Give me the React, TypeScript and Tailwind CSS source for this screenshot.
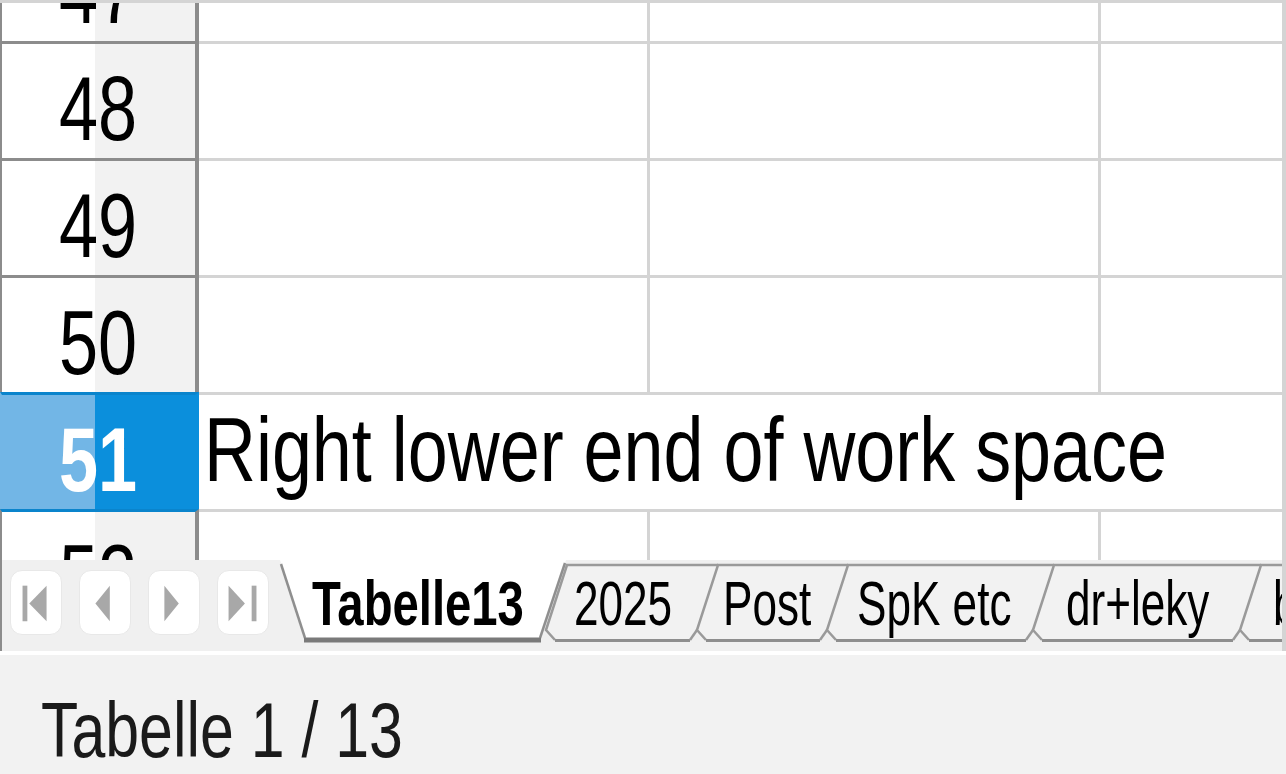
import React from "react";

function NavIcon({ kind }: { kind: number }) {
  const c = "#a8a8a8";
  return (
    <svg width="52" height="65" viewBox="0 0 52 65">
      {kind === 0 && (
        <>
          <rect x="12" y="15" width="5" height="37" fill={c} />
          <polygon points="19,33.5 37,15 37,52" fill={c} />
        </>
      )}
      {kind === 1 && <polygon points="16,33.5 31,15 31,52" fill={c} />}
      {kind === 2 && <polygon points="31,33.5 16,15 16,52" fill={c} />}
      {kind === 3 && (
        <>
          <polygon points="28,33.5 11,15 11,52" fill={c} />
          <rect x="35" y="15" width="5" height="37" fill={c} />
        </>
      )}
    </svg>
  );
}

function InactiveTab({
  w,
  cls,
  padCls,
  label,
}: {
  w: number;
  cls: string;
  padCls: string;
  label: string;
}) {
  return (
    <div className={`relative shrink-0 h-full ${cls}`}>
      <svg
        className="absolute left-0 top-0 overflow-visible"
        width={w}
        height={91}
      >
        <path
          d={`M0,70 L21,5 L${w + 21},5 L${w},70 L${w - 7},80 L9,80 Z`}
          fill="#f2f2f2"
        />
        <path
          d={`M9,80 L0,70 L21,5 L${w + 21},5`}
          fill="none"
          stroke="#9a9a9a"
          strokeWidth="2.5"
        />
        <path d={`M9,80.5 L${w - 7},80.5`} stroke="#8e8e8e" strokeWidth="3" />
        <path
          d={`M${w - 7},80 L${w},70`}
          fill="none"
          stroke="#9a9a9a"
          strokeWidth="2.5"
        />
      </svg>
      <div className={`relative pt-[12px] ${padCls}`}>
        <span className="inline-block whitespace-nowrap text-[63px] leading-none text-black scale-x-[0.7] origin-left">
          {label}
        </span>
      </div>
    </div>
  );
}

function Row({
  n,
  sel,
  selAbove,
  text,
}: {
  n: number;
  sel?: boolean;
  selAbove?: boolean;
  text?: string;
}) {
  const headCls = sel
    ? "border-t-[#0a84cc] border-l-[#72b6e6] border-r-[#0b8fdc] bg-[linear-gradient(90deg,#72b6e6_93px,#0b8fdc_93px)] text-white font-bold"
    : selAbove
    ? "border-t-[#0a84cc] border-l-[#8c8c8c] border-r-[#8c8c8c] bg-[linear-gradient(90deg,#ffffff_93px,#f2f2f2_93px)] text-black"
    : "border-t-[#8c8c8c] border-l-[#8c8c8c] border-r-[#8c8c8c] bg-[linear-gradient(90deg,#ffffff_93px,#f2f2f2_93px)] text-black";
  return (
    <div className="flex h-[117px] shrink-0">
      <div
        className={`w-[199px] shrink-0 border-t-[3px] border-l-2 border-r-4 flex justify-center items-start pt-[20px] ${headCls}`}
      >
        <span className="inline-block text-[90px] leading-none scale-x-[0.78]">
          {n}
        </span>
      </div>
      {text ? (
        <div className="flex-1 border-t-[3px] border-[#d4d4d4] bg-white pt-[9px] pl-[5px] overflow-visible">
          <span className="inline-block whitespace-nowrap text-[91px] leading-none text-black scale-x-[0.79] origin-left">
            {text}
          </span>
        </div>
      ) : (
        <>
          <div className="w-[451px] shrink-0 border-t-[3px] border-r-[3px] border-[#d4d4d4] bg-white" />
          <div className="w-[451px] shrink-0 border-t-[3px] border-r-[3px] border-[#d4d4d4] bg-white" />
          <div className="flex-1 border-t-[3px] border-[#d4d4d4] bg-white" />
        </>
      )}
    </div>
  );
}

export default function App() {
  return (
    <div className="w-[1286px] h-[774px] overflow-hidden flex flex-col bg-[#f2f2f2] font-['Liberation_Sans',Arial,sans-serif]">
      <div className="h-[651px] shrink-0 flex flex-col border-t-[3px] border-r-4 border-[#d4d4d4] bg-white">
        <div className="h-[557px] shrink-0 overflow-hidden">
          <div className="-mt-[79px] flex flex-col">
            <Row n={47} />
            <Row n={48} />
            <Row n={49} />
            <Row n={50} />
            <Row n={51} sel text="Right lower end of work space" />
            <Row n={52} selAbove />
          </div>
        </div>
        <div className="h-[91px] shrink-0 flex bg-[#f0f0f0] border-l-2 border-[#8c8c8c] overflow-hidden">
          <div className="w-[278px] shrink-0 flex gap-[17px] pl-[8px] pt-[10px]">
            {[0, 1, 2, 3].map((k) => (
              <div
                key={k}
                className="w-[52px] h-[65px] rounded-[12px] bg-white border border-[#e8e8e8] flex items-center justify-center"
              >
                <NavIcon kind={k} />
              </div>
            ))}
          </div>
          <div className="relative z-10 shrink-0 w-[266px] h-full">
            <svg
              className="absolute left-0 top-0 overflow-visible"
              width="266"
              height="91"
            >
              <path d="M0,0 L25,78 L260,78 L286,0 Z" fill="#ffffff" />
              <path d="M1,4 L25,78" stroke="#8f8f8f" strokeWidth="2.5" />
              <path d="M260,78 L285,3" stroke="#8f8f8f" strokeWidth="2.5" />
              <path d="M24,80 L261,80" stroke="#7a7a7a" strokeWidth="5" />
            </svg>
            <div className="relative pt-[12px] pl-[32px]">
              <span className="inline-block whitespace-nowrap text-[63px] leading-none font-bold text-black scale-x-[0.75] origin-left">
                Tabelle13
              </span>
            </div>
          </div>
          <InactiveTab w={151} cls="w-[151px]" padCls="pl-[28px]" label="2025" />
          <InactiveTab w={130} cls="w-[130px]" padCls="pl-[26px]" label="Post" />
          <InactiveTab w={206} cls="w-[206px]" padCls="pl-[30px]" label="SpK etc" />
          <InactiveTab w={207} cls="w-[207px]" padCls="pl-[33px]" label="dr+leky" />
          <InactiveTab w={200} cls="w-[200px]" padCls="pl-[33px]" label="byt" />
        </div>
      </div>
      <div className="h-[123px] shrink-0 border-t-4 border-white bg-[#f2f2f2] pl-[41px] pt-[37px]">
        <span className="inline-block whitespace-nowrap text-[77px] leading-none text-[#1a1a1a] scale-x-[0.79] origin-left">
          Tabelle 1 / 13
        </span>
      </div>
    </div>
  );
}
